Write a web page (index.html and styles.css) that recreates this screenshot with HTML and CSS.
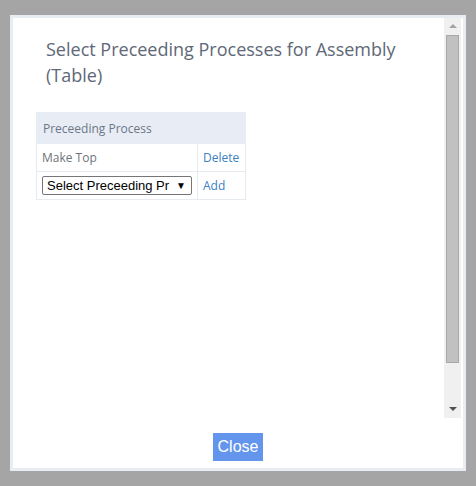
FILE: index.html
```html
<!DOCTYPE html>
<html>
<head>
<meta charset="utf-8">
<link rel="stylesheet" href="styles.css">
</head>
<body>
<div class="dialog">
  <div class="body-row">
    <div class="content">
      <h1 class="title">Select Preceeding Processes for Assembly (Table)</h1>
      <table class="proc">
        <tr><th colspan="2">Preceeding Process</th></tr>
        <tr><td class="name">Make Top</td><td class="act"><a>Delete</a></td></tr>
        <tr><td class="name"><div class="select"><span>Select Preceeding Pr</span><span class="arrow">▼</span></div></td><td class="act"><a>Add</a></td></tr>
      </table>
    </div>
    <div class="scrollbar">
      <div class="sb-up"></div>
      <div class="sb-track"><div class="sb-thumb"></div></div>
      <div class="sb-down"></div>
    </div>
  </div>
  <div class="footer"><button class="close">Close</button></div>
</div>
</body>
</html>
```
FILE: styles.css
```css
html, body { margin: 0; padding: 0; }
body { background: #a5a5a5; width: 476px; height: 486px; overflow: hidden; }
.dialog {
  margin: 15px 0 0 10px;
  width: 450px;
  height: 450px;
  border: 3px solid #e8ecf3;
  background: #fff;
}
.body-row { display: flex; height: 400px; }
.content { width: 431px; height: 400px; overflow: hidden; }
.title {
  margin: 0;
  padding: 18px 20px 0 33px;
  font-family: "Open Sans", sans-serif;
  font-weight: 400;
  font-size: 18px;
  line-height: 26px;
  color: #5e6877;
}
.proc {
  margin: 24px 0 0 23px;
  border-collapse: collapse;
  font-family: "Open Sans", sans-serif;
  font-size: 12px;
}
.proc th {
  background: #e8edf5;
  color: #6b7787;
  font-weight: 400;
  text-align: left;
  height: 30px;
  padding: 0 0 0 6px;
  border: 1px solid #e8edf5;
}
.proc td {
  border: 1px solid #e6ebf1;
  height: 27px;
  padding: 0;
  color: #6e747b;
}
.proc td.name { width: 155px; padding-left: 5px; }
.proc td.act { width: 42px; padding-left: 5px; }
.proc a { color: #3b7fc4; }
.select {
  box-sizing: border-box;
  width: 150px;
  height: 19px;
  border: 1px solid #767676;
  border-radius: 2px;
  display: flex;
  align-items: center;
  justify-content: space-between;
  padding: 0 5px 0 4px;
  font-family: "Liberation Sans", Arial, sans-serif;
  font-size: 13px;
  color: #000;
  background: #fff;
}
.select .arrow { font-size: 10px; }
.scrollbar {
  width: 17px;
  height: 400px;
  background: #f0f0f0;
  display: flex;
  flex-direction: column;
}
.sb-up, .sb-down { height: 17px; position: relative; }
.sb-up::after {
  content: ""; position: absolute; left: 5px; top: 6px;
  border-left: 4px solid transparent; border-right: 4px solid transparent;
  border-bottom: 4px solid #a3a3a3;
}
.sb-down::after {
  content: ""; position: absolute; left: 5px; top: 6px;
  border-left: 4px solid transparent; border-right: 4px solid transparent;
  border-top: 4px solid #505050;
}
.sb-track { flex: 1; padding: 0 2px; }
.sb-thumb {
  box-sizing: border-box;
  height: 328px;
  background: #c1c1c1;
  border: 1px solid #a8a8a8;
}
.footer { display: flex; justify-content: center; padding-top: 15px; }
.close {
  width: 50px;
  height: 28px;
  border: none;
  background: #6495ed;
  color: #fff;
  font-family: "Liberation Sans", Arial, sans-serif;
  font-size: 16px;
  padding: 0;
}
```
